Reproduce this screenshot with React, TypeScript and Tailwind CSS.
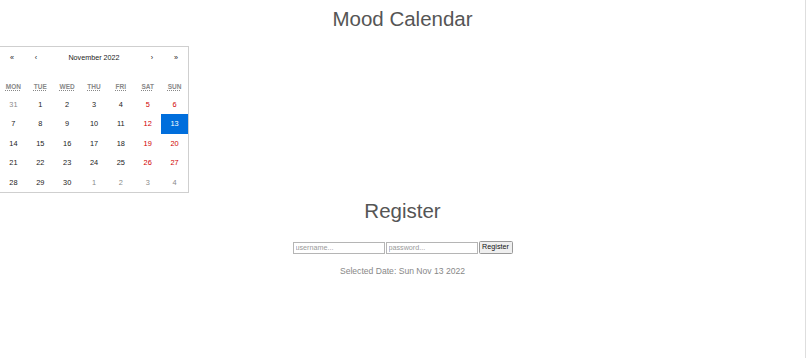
import React from 'react';

type Tile = { day: number; kind: 'normal' | 'weekend' | 'neighbor' | 'active' };

const weekdays = [
  { short: 'Mon', full: 'Monday' },
  { short: 'Tue', full: 'Tuesday' },
  { short: 'Wed', full: 'Wednesday' },
  { short: 'Thu', full: 'Thursday' },
  { short: 'Fri', full: 'Friday' },
  { short: 'Sat', full: 'Saturday' },
  { short: 'Sun', full: 'Sunday' },
];

// November 2022, weeks starting on Monday
const tiles: Tile[] = (() => {
  const out: Tile[] = [{ day: 31, kind: 'neighbor' }];
  for (let d = 1; d <= 30; d++) {
    const col = out.length % 7;
    if (d === 13) out.push({ day: d, kind: 'active' });
    else out.push({ day: d, kind: col >= 5 ? 'weekend' : 'normal' });
  }
  for (let d = 1; d <= 4; d++) out.push({ day: d, kind: 'neighbor' });
  return out;
})();

const tileColor = {
  normal: 'text-[#222]',
  weekend: 'text-[#d10000]',
  neighbor: 'text-[#8a8a8a]',
  active: 'bg-[#006edc] text-white',
};

function Calendar() {
  return (
    <div className="-ml-px mt-[15.5px] w-[190px] border border-[#cfcfcf] bg-white">
      <div className="mb-[8.6px] flex h-[24px] items-center text-[7.2px] text-[#222]">
        <button className="h-full w-[24px]">«</button>
        <button className="h-full w-[24px]">‹</button>
        <button className="h-full flex-1">November 2022</button>
        <button className="h-full w-[24px]">›</button>
        <button className="h-full w-[24px]">»</button>
      </div>
      <div className="grid grid-cols-7 pt-[4px] pb-[4px] text-center text-[6.5px] font-bold uppercase leading-[7.6px] text-[#888]">
        {weekdays.map((w) => (
          <div key={w.short}>
            <abbr title={w.full} className="underline decoration-dotted">
              {w.short}
            </abbr>
          </div>
        ))}
      </div>
      <div className="grid grid-cols-7">
        {tiles.map((t, i) => (
          <button
            key={i}
            className={`flex h-[19.5px] items-center justify-center text-[7.4px] ${tileColor[t.kind]}`}
          >
            {t.day}
          </button>
        ))}
      </div>
    </div>
  );
}

export default function App() {
  return (
    <div className="h-[358px] w-full overflow-hidden border-r border-[#dedede] bg-white font-['Liberation_Sans',Arial,sans-serif]">
      <h1 className="pt-[6.5px] text-center text-[20.5px] leading-[23.5px] text-[#555]">Mood Calendar</h1>
      <Calendar />
      <h1 className="mt-[6px] text-center text-[20.5px] leading-[23.5px] text-[#555]">Register</h1>
      <form className="mt-[18.5px] flex items-center justify-center gap-px">
        <input
          placeholder="username..."
          className="h-[12px] w-[92px] border border-[#b5b5b5] px-[2px] text-[7.2px] placeholder:text-[#9a9a9a]"
        />
        <input
          type="password"
          placeholder="password..."
          className="h-[12px] w-[92px] border border-[#b5b5b5] px-[2px] text-[7.2px] placeholder:text-[#9a9a9a]"
        />
        <button
          type="button"
          className="h-[13px] w-[34px] rounded-[1.5px] border border-[#999] bg-[#efefef] text-[7.2px] text-[#111]"
        >
          Register
        </button>
      </form>
      <p className="mt-[12px] text-center text-[8.6px] leading-[10px] text-[#888]">Selected Date: Sun Nov 13 2022</p>
    </div>
  );
}
